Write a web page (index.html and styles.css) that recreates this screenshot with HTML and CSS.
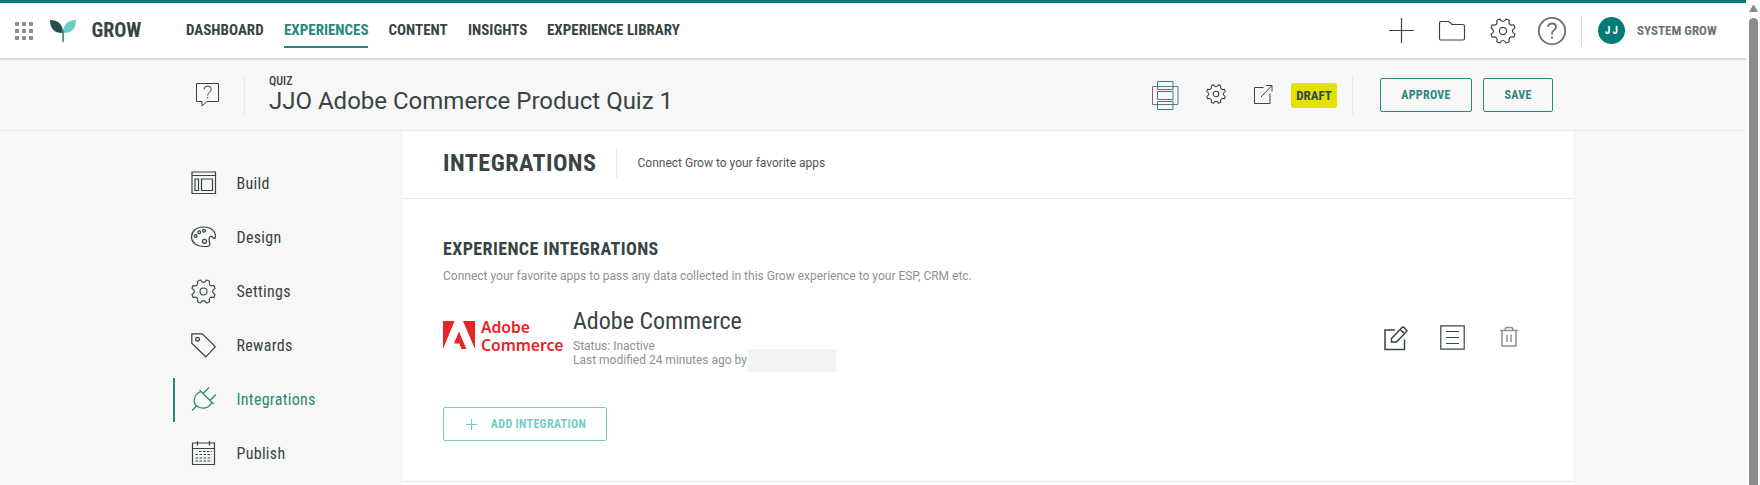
FILE: index.html
```html
<!DOCTYPE html>
<html lang="en">

<head>
  <meta charset="UTF-8" />
  <meta name="viewport" content="width=device-width, initial-scale=1.0" />
  <title>Grow - Integrations</title>
  <link rel="stylesheet" href="styles.css">
</head>

<body>
  <!-- shared icon shapes -->
  <svg class="defs" width="0" height="0">
    <symbol id="gear" viewBox="0 0 26 26">
      <path d="M9.920 1.090 C11.470 4.330 14.530 4.330 16.080 1.090 Q17.900 1.200 19.240 2.400 C18.050 5.790 20.210 7.950 23.600 6.760 Q24.800 8.100 24.910 9.920 C21.670 11.470 21.670 14.530 24.910 16.080 Q24.800 17.900 23.600 19.240 C20.210 18.050 18.050 20.210 19.240 23.600 Q17.900 24.800 16.080 24.910 C14.530 21.670 11.470 21.670 9.920 24.910 Q8.100 24.800 6.760 23.600 C7.950 20.210 5.790 18.050 2.400 19.240 Q1.200 17.900 1.090 16.080 C4.330 14.530 4.330 11.470 1.090 9.920 Q1.200 8.100 2.400 6.760 C5.790 7.950 7.950 5.790 6.760 2.400 Q8.100 1.200 9.920 1.090 Z" />
      <circle cx="13" cy="13" r="3.6" />
    </symbol>
  </svg>

  <div class="page">
    <header class="topbar">
      <svg class="apps" width="18" height="18" viewBox="0 0 18 18">
        <path d="M0 0h4v4h-4zM7 0h4v4h-4zM14 0h4v4h-4zM0 7h4v4h-4zM7 7h4v4h-4zM14 7h4v4h-4zM0 14h4v4h-4zM7 14h4v4h-4zM14 14h4v4h-4z" />
      </svg>
      <svg class="leaf" width="26" height="22" viewBox="0 0 26 22">
        <path fill="#23504d" d="M0 0 C8 0 13 4 13 13 C5 13.500 0 9 0 0Z" />
        <path fill="#68cfc0" d="M26 0 C18 0 13 4 13 13 C21 13.500 26 9 26 0Z" />
        <path fill="#4e817c" d="M12.200 10h1.700v12h-1.700z" />
      </svg>
      <span class="brand">GROW</span>
      <nav class="nav">
        <a class="n1">DASHBOARD</a>
        <a class="n2 active">EXPERIENCES</a>
        <a class="n3">CONTENT</a>
        <a class="n4">INSIGHTS</a>
        <a class="n5">EXPERIENCE LIBRARY</a>
      </nav>
      <div class="tools">
        <svg class="icon plus" width="25" height="25" viewBox="0 0 25 25"><path d="M12.500 0v25M0 12.500h25" /></svg>
        <svg class="icon folder" width="28" height="22" viewBox="0 0 28 22"><path d="M1.500 18.500v-15q0-2 2-2h7.500l3 3h10.500q2 0 2 2v12q0 1.500-1.500 1.500h-22q-1.500 0-1.500-1.500z" /></svg>
        <svg class="icon gear-lg" width="26" height="26"><use href="#gear" /></svg>
        <svg class="icon help" width="28" height="28" viewBox="0 0 28 28"><circle cx="14" cy="14" r="13.200" /><path d="M10 10q.3-3.500 4.200-3.500q3.800 0 3.800 3.500q0 1.700-2 3.100q-2 1.500-2 3.400v1M14 19.500v2.200" /></svg>
      </div>
      <div class="user">
        <span class="avatar">JJ</span>
        <span class="username">SYSTEM GROW</span>
      </div>
    </header>

    <section class="subbar">
      <svg class="icon quiz" width="24" height="26" viewBox="0 0 24 26">
        <path d="M.5 1.500h22v18h-11.500l-5 4.500v-4.500h-5.500z" />
        <path d="M8 7.500q0-3.500 3.700-3.500q3.600 0 3.600 3.400q0 1.600-1.800 2.800q-1.800 1-1.800 3.300M11.700 15v1.500" />
      </svg>
      <div class="title">
        <span class="kind">QUIZ</span>
        <h1>JJO Adobe Commerce Product Quiz 1</h1>
      </div>
      <div class="actions">
        <svg class="icon stack" width="27" height="30" viewBox="0 0 27 30">
          <path class="slate" d="M.5 6.500h25.500v18h-25.500z" />
          <path class="green" d="M5.500 1.500h15.500v8h-15.500zM5.500 11.500h15.500v8h-15.500zM5.500 21.500h15.500v8h-15.500z" />
        </svg>
        <svg class="icon gear-sm" width="20" height="20"><use href="#gear" /></svg>
        <svg class="icon open" width="19" height="19" viewBox="0 0 19 19"><path d="M9.500 2.500h-9v16h15.500v-10M7 12l11-11.500M12 .5h6v6" /></svg>
        <span class="badge">DRAFT</span>
        <div class="buttons">
          <button class="btn approve">APPROVE</button>
          <button class="btn save">SAVE</button>
        </div>
      </div>
    </section>

    <div class="content">
      <aside class="sidebar">
        <a class="item">
          <svg class="icon" width="26" height="26" viewBox="0 0 26 26"><path d="M1 2h23.500v21.500h-23.500zM1 5.500h23.500M4 9h3.500v11.500h-3.500zM10.500 9h11v11.500h-11z" /></svg>
          <span>Build</span>
        </a>
        <a class="item">
          <svg class="icon" width="26" height="26" viewBox="0 0 26 26"><path d="M19 20c-1-3-2-5 0-7.500c3-1 3 2.500 5 2c2-7-4-11.500-11.500-11.500c-7.500 0-12 4.500-12 10c0 5.500 5 9.500 11.500 9.500c4 0 7 .5 7-2.500z" /><circle cx="4.600" cy="12" r="1.400" /><circle cx="8.300" cy="8.300" r="1.400" /><circle cx="13" cy="6.800" r="1.400" /><circle cx="13.500" cy="17.300" r="2" /></svg>
          <span>Design</span>
        </a>
        <a class="item">
          <svg class="icon" width="25" height="25"><use href="#gear" /></svg>
          <span>Settings</span>
        </a>
        <a class="item">
          <svg class="icon" width="26" height="26" viewBox="0 0 26 26"><path d="M.8 1.800h10.500l13 13l-9.500 10l-14-13.500z" /><circle cx="6.500" cy="7.300" r="1.900" /></svg>
          <span>Rewards</span>
        </a>
        <a class="item active">
          <svg class="icon" width="26" height="26" viewBox="0 0 26 26"><path d="M8.500 4l14 14M10 5.500c-8 3-8.500 12-3.500 15c5 3 11 2 14.500-4M12 7.500l6-6M19 14.500l6-6M1 24.500l5-5" /></svg>
          <span>Integrations</span>
        </a>
        <a class="item">
          <svg class="icon" width="26" height="26" viewBox="0 0 26 26"><path d="M1.500 3h22v21.500h-22zM1.500 8.500h22M6.500 1v4.500M18.500 1v4.500" /><path stroke-dasharray="2.500 1.500" d="M8 11.500h13M4.500 14.500h16.500M4.500 18h16.500M4.500 21h16.500" /></svg>
          <span>Publish</span>
        </a>
      </aside>

      <main class="main">
        <div class="main-head">
          <h2>INTEGRATIONS</h2>
          <p>Connect Grow to your favorite apps</p>
        </div>
        <div class="panel">
          <h3>EXPERIENCE INTEGRATIONS</h3>
          <p class="desc">Connect your favorite apps to pass any data collected in this Grow experience to your ESP, CRM etc.</p>
          <div class="integration">
            <svg class="adobe" width="32" height="28" viewBox="0 0 32 28"><path d="M0 0h11.500L0 28zM20 0h12v28zM16 10.500l7.300 17.500h-4.800l-2.200-5.600h-5.400z" /></svg>
            <div class="logo-text"><span>Adobe</span><span>Commerce</span></div>
            <div class="info">
              <h4>Adobe Commerce</h4>
              <p>Status: Inactive</p>
              <div class="modified"><p>Last modified 24 minutes ago by</p><span class="redacted"></span></div>
            </div>
            <div class="row-actions">
              <svg class="icon edit" width="25" height="25" viewBox="0 0 25 25"><path d="M11 4h-10v19.500h19.500v-10M7.500 12.500l11-11.500q2 0 4.500 4l-10.500 11h-5zM16 3.500l4.500 4" /></svg>
              <svg class="icon list" width="25" height="25" viewBox="0 0 25 25"><path d="M.8.800h23.400v23.400h-23.400zM6 6.500h13M6 12.500h13M6 18.500h13" /></svg>
              <svg class="icon trash" width="18" height="20" viewBox="0 0 18 20"><path d="M0 3.500h18M2 3.500v15.500h14v-15.500M5 3.500q0-3 2-3h4q2 0 2 3M7 7.500v7.500M11 7.500v7.500" /></svg>
            </div>
          </div>
          <button class="btn add">
            <svg width="11" height="11" viewBox="0 0 11 11"><path d="M5.500 0v11M0 5.500h11" /></svg>
            <span>ADD INTEGRATION</span>
          </button>
        </div>
      </main>
    </div>
  </div>

  <div class="scrollbar">
    <div class="arrow"></div>
    <div class="thumb"></div>
  </div>
</body>

</html>
```
FILE: styles.css
```css
* {
  box-sizing: border-box;
}

body {
  margin: 0;
  height: 485px;
  display: flex;
  overflow: hidden;
  background: #fcfcfc;
  color: #384443;
  font-family: Roboto, sans-serif;
  font-size: 12px;
}

h1, h2, h3, h4, p {
  margin: 0;
  white-space: nowrap;
}

svg {
  display: block;
  flex-shrink: 0;
}

.defs {
  position: absolute;
}

.icon {
  fill: none;
  stroke: #384443;
  stroke-width: 1.2;
  overflow: visible;
}

.brand, .nav, .user, .kind, .badge, .btn, .sidebar, h2, h3, h4 {
  font-family: "Roboto Condensed", Roboto, sans-serif;
  font-stretch: condensed;
  white-space: nowrap;
}

.page {
  width: 1746px;
  height: 485px;
  background: #f7f7f7;
}

/* top bar */
.topbar {
  height: 60px;
  padding-left: 15px;
  display: flex;
  align-items: center;
  background: #fff;
  border-top: 3px solid #037b76;
  border-bottom: 2px solid #d3d9d8;
}

.apps {
  fill: #86908e;
  margin-right: 17px;
}

.leaf {
  margin-right: 15.5px;
  margin-top: 1px;
}

.brand {
  width: 94.5px;
  margin-top: -2px;
  font-size: 20px;
  font-weight: 700;
}

.nav {
  display: flex;
  font-size: 15px;
  font-weight: 700;
}

.nav a {
  height: 32px;
  line-height: 29px;
  margin-top: 2px;
  border-bottom: 2px solid transparent;
}

.nav .active {
  color: #2a8878;
  border-color: #2a8878;
}

.n1 { width: 76px; margin-right: 22px; }
.n2 { width: 84px; margin-right: 20.5px; }
.n3 { width: 58px; margin-right: 21.5px; }
.n4 { width: 58px; margin-right: 21px; }

.tools {
  display: flex;
  align-items: center;
  margin-left: auto;
}

.folder { margin-left: 24px; }
.gear-lg { margin-left: 24px; }
.help { margin: 0 15px 0 22px; stroke: #6a7371; stroke-width: 1.8; }

.user {
  height: 30px;
  width: 165px;
  padding-left: 16px;
  display: flex;
  align-items: center;
  border-left: 1px solid #d3d9d8;
}

.avatar {
  width: 27px;
  height: 27px;
  margin-right: 12px;
  padding-left: 2px;
  border-radius: 50%;
  background: #037b76;
  color: #fff;
  font-size: 11px;
  font-weight: 700;
  letter-spacing: 2px;
  line-height: 28px;
  text-align: center;
}

.username {
  color: #6a7371;
  font-size: 13px;
  font-weight: 700;
}

/* title bar */
.subbar {
  height: 71px;
  padding-left: 196px;
  display: flex;
  align-items: center;
  border-bottom: 1px solid #e5e9e8;
}

.quiz {
  stroke-width: 1;
}

.title {
  height: 39px;
  margin-left: 24px;
  padding-left: 24px;
  border-left: 1px solid #e5e9e8;
}

.kind {
  display: block;
  font-size: 12px;
  font-weight: 500;
  line-height: 10px;
}

h1 {
  font-size: 24px;
  font-weight: 400;
  line-height: 30px;
}

.actions {
  display: flex;
  align-items: center;
  margin-left: auto;
  padding-right: 193px;
}

.stack { stroke-width: 1; }
.stack .slate { stroke: #60798a; }
.stack .green { stroke: #2a8878; }
.gear-sm { margin: -2px 0 0 27px; stroke-width: 1.4; }
.open { margin: -1px 0 0 28px; stroke-width: 1; }

.badge {
  width: 46px;
  height: 25px;
  margin-left: 18px;
  border-radius: 3px;
  background: #e0e300;
  font-size: 13px;
  font-weight: 700;
  line-height: 25px;
  text-align: center;
}

.buttons {
  height: 40px;
  margin-left: 15px;
  padding-left: 27px;
  display: flex;
  align-items: center;
  gap: 11px;
  border-left: 1px solid #e5e9e8;
}

.btn {
  height: 34px;
  padding: 0;
  display: flex;
  align-items: center;
  justify-content: center;
  background: transparent;
  border: 1px solid #2a8878;
  border-radius: 2px;
  color: #2a8878;
  font-size: 12px;
  font-weight: 700;
  letter-spacing: .3px;
}

.approve { width: 92px; }
.save { width: 70px; }

/* side menu */
.content {
  display: flex;
}

.sidebar {
  width: 403px;
  padding: 31px 0 0 173px;
}

.item {
  height: 44px;
  margin-bottom: 10px;
  padding: 0 .5px 2px 16px;
  display: flex;
  align-items: center;
  border-left: 2px solid transparent;
  font-size: 16px;
  letter-spacing: .3px;
}

.item span {
  margin-left: auto;
  width: 166px;
}

.item.active {
  color: #2a8878;
  border-color: #2a8878;
}

.item.active .icon {
  stroke: #2a8878;
}

/* main area */
.main {
  width: 1170px;
  height: 354px;
  background: #fff;
}

.main-head {
  height: 68px;
  padding: 0 0 3px 40px;
  display: flex;
  align-items: center;
  border-bottom: 1px solid #e5e9e8;
}

h2 {
  width: 173px;
  font-size: 24px;
  font-weight: 700;
  letter-spacing: .5px;
}

.main-head p {
  height: 29px;
  padding-left: 20.5px;
  border-left: 1px solid #e5e9e8;
  color: #4d5857;
  line-height: 28px;
}

.panel {
  height: 283px;
  padding: 38px 40px 0;
  border-bottom: 1px solid #e5e9e8;
}

h3 {
  font-size: 18px;
  font-weight: 700;
  letter-spacing: .4px;
  line-height: 24px;
}

.desc {
  margin-top: 7px;
  line-height: 16px;
  color: #8a9391;
}

.integration {
  height: 75px;
  margin-top: 20px;
  display: flex;
}

.adobe {
  margin-top: 17px;
  fill: #eb2226;
}

.logo-text {
  width: 92px;
  margin: 14px 0 0 6px;
  color: #eb2226;
  font-family: "Noto Sans", sans-serif;
  font-size: 15.7px;
  font-weight: 600;
  line-height: 18px;
}

.logo-text span {
  display: block;
}

h4 {
  padding-top: 2px;
  font-size: 24px;
  font-weight: 400;
  line-height: 30px;
}

.info p {
  color: #8a9391;
  line-height: 14px;
}

.info > p {
  margin-top: 3px;
}

.modified {
  height: 14px;
  display: flex;
}

.redacted {
  width: 88px;
  height: 23px;
  margin: -4px 0 0 1px;
  background: #f2f3f3;
}

.row-actions {
  margin: 21px 15px 0 auto;
  display: flex;
  align-items: flex-start;
}

.edit { margin-top: 1px; stroke-width: 1.5; }
.list { margin-left: 31px; }
.trash { margin: 2px 0 0 35px; stroke: #8a9391; stroke-width: 1.5; }

.add {
  width: 164px;
  margin-top: 28px;
  padding-left: 2px;
  gap: 14px;
  border-color: #72cfc1;
  color: #72cfc1;
}

.add svg {
  stroke: #72cfc1;
}

/* scrollbar */
.scrollbar {
  width: 14px;
  padding: 5px 2px 0 3px;
}

.arrow {
  height: 7px;
  border: solid transparent;
  border-width: 0 4.5px 7px;
  border-bottom-color: #8b8b8b;
}

.thumb {
  height: 480px;
  margin-top: 6px;
  border-radius: 5px;
  background: #8b8b8b;
}
```
